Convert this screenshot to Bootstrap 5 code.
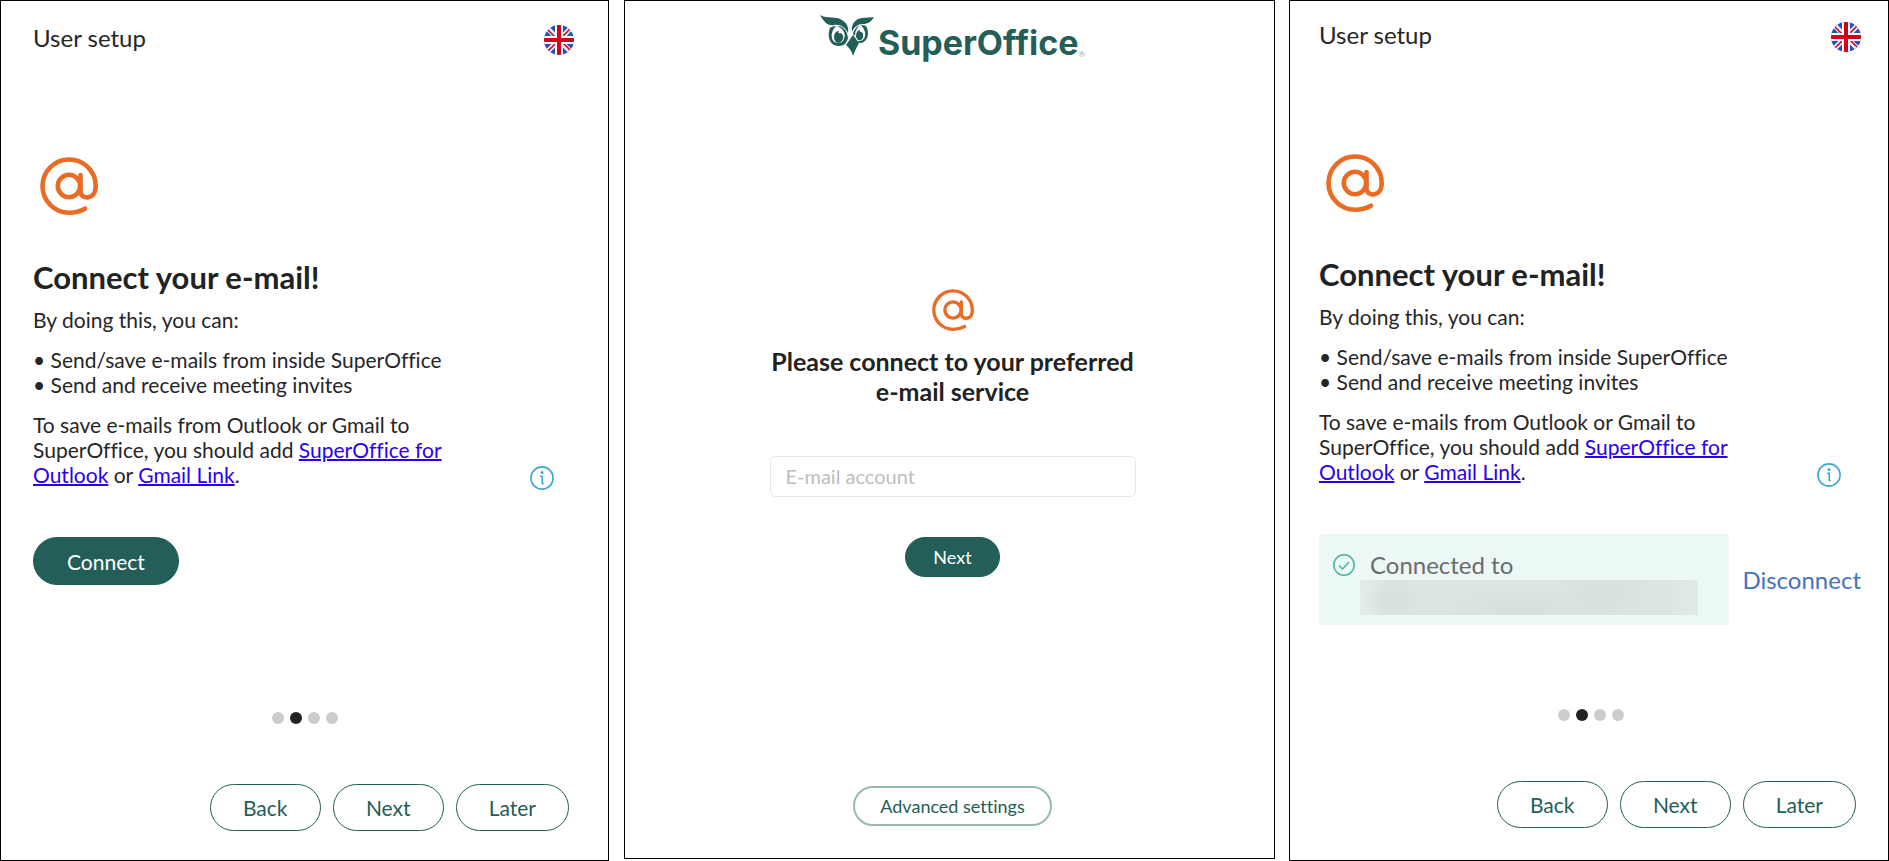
<!DOCTYPE html>
<html lang="en">
<head>
<meta charset="utf-8">
<meta name="viewport" content="width=device-width, initial-scale=1">
<title>SuperOffice user setup</title>
<link href="https://cdn.jsdelivr.net/npm/bootstrap@5.3.0/dist/css/bootstrap.min.css" rel="stylesheet">
<style>
  :root { --so-green: #235e58; --so-ink: #262626; }
  body { font-family: Lato, sans-serif; color: var(--so-ink); background: #fff; font-size: 21px; line-height: 25px; font-variant-ligatures: none; }
  .setup-grid { display: grid; grid-template-columns: 1fr; gap: 14px; min-height: 100vh; }
  @media (min-width: 1400px) { .setup-grid { grid-template-columns: 610fr 651fr 600fr; } }
  .panel { border: 1px solid #000; }
  .panel-first { padding: 22px 34px 29px 32px; margin-right: 1px; }
  .panel-mid { padding: 14px 0 32px 6px; margin-bottom: 2px; }
  .panel-last { padding: 19px 27px 32px 29px; }
  .top-title { font-size: 24px; line-height: 30px; font-weight: 400; }
  .flag { width: 30px; height: 30px; border-radius: 50%; margin-top: 2px; }
  .at-lg { width: 58px; height: 58px; margin: 102px 0 44px 7px; }
  .at-md { width: 42px; height: 42px; }
  .step-title { font-size: 31px; line-height: 36px; font-weight: 700; margin-bottom: 12px; color: #222; }
  .step-text { max-width: 440px; margin-bottom: 3px; }
  .step-text p, .step-text ul { margin-bottom: 15px; }
  .step-text p:last-child { margin-bottom: 0; }
  .step-text a { color: #2a00f0; text-decoration-thickness: 2px; }
  .step-text li::before { content: "• "; }
  .info-row { margin-bottom: 47px; }
  .info { width: 24px; height: 24px; margin-right: 20px; }
  .action { min-height: 91px; }
  .pill { border-radius: 24px; font-size: 21px; line-height: 25px; font-variant-ligatures: none; padding: 10px 32px; color: var(--so-green); border: 1px solid var(--so-green); }
  .pill:hover { background: #eaf7f5; color: var(--so-green); }
  .pill-solid { background: var(--so-green); color: #fff; padding: 11px 33px 10px; }
  .pill-solid:hover { background: #1b4b46; color: #fff; }
  .pill-sm { font-size: 18px; line-height: 22px; padding: 8px 27px; }
  .pill-soft { border: 2px solid #9ab8b4; padding: 7px 25px; }
  .dots { gap: 6px; margin-bottom: 60px; padding-left: 2px; }
  .dot { width: 12px; height: 12px; border-radius: 50%; background: #ccc; }
  .dot.active { background: #222; }
  .foot { gap: 12px; margin-right: 5px; }
  .foot .pill { min-width: 111px; }
  .status { width: 410px; max-width: 100%; padding: 19px 31px 10px 14px; background: #ebf8f6; color: #6b6b6b; font-size: 24px; line-height: 23px; }
  .status svg { width: 22px; height: 22px; }
  .status-line { gap: 15px; }
  .masked { height: 35px; margin: 4px 0 0 27px; background: radial-gradient(ellipse 30px 22px at 34px 20px, #d5dfdb, transparent), radial-gradient(ellipse 90px 22px at 160px 28px, #d5dfdc, transparent), radial-gradient(ellipse 50px 26px at 244px 14px, #d5e0dc, transparent), linear-gradient(90deg, #e2edea, #dbe6e3 30px, #dbe6e3 310px, #e1ece9); }
  .disconnect { color: #4472c4; font-size: 24px; line-height: 30px; }
  .logo { margin-bottom: 16px; }
  .owl { width: 54px; height: 41px; }
  .brand { font: 700 34px/40px Inter, sans-serif; color: var(--so-green); padding-top: 8px; }
  .reg { font-size: 8px; line-height: 8px; color: #8fb0ac; margin-bottom: 5px; }
  .mid-title { font-size: 25px; line-height: 30px; font-weight: 700; margin: 15px 0 50px; color: #222; }
  .mid-form { width: 366px; max-width: 100%; }
  .mid-form .form-control { height: 41px; font-size: 20px; padding: 0 15px; border-color: #e9e9e9; border-radius: 5px; margin-bottom: 40px; }
  .mid-form .form-control::placeholder { color: #bdbdbd; }
</style>
</head>
<body>
<svg class="d-none" aria-hidden="true">
  <symbol id="at" viewBox="0 0 58 58">
    <g fill="none" stroke="#e96b24" stroke-linecap="round" stroke-linejoin="round">
      <circle cx="29" cy="29" r="11.2"/>
      <path d="M40.500 18v16.500C40.500 42.500 55.700 44 55.700 29A26.600 26.600 0 1 0 29 55.700C35.500 55.700 40.500 54.200 45 51.700"/>
    </g>
  </symbol>
  <symbol id="uk" viewBox="0 0 30 30">
    <path fill="#2a50b8" d="M0 0h30v30H0z"/>
    <path stroke="#f4f4f8" stroke-width="5" d="M2 2l26 26M28 2L2 28"/>
    <path stroke="#d80027" stroke-width="1.700" d="M4 5l8 8M26 4l-8 8M4 26l8-8M26 25l-8-8"/>
    <path stroke="#fff" stroke-width="8" d="M15 0v30M0 15h30"/>
    <path stroke="#d0021b" stroke-width="4" d="M15 0v30M0 15h30"/>
  </symbol>
  <symbol id="info" viewBox="0 0 24 24">
    <g fill="none" stroke="#41a8cf" stroke-width="1.600"><circle cx="12" cy="12" r="11.100"/><path d="M10 10.300h2.200v6.700q0 .8 1.600.6"/></g>
    <circle cx="12" cy="6.500" r="1.500" fill="#41a8cf"/>
  </symbol>
</svg>

<main class="setup-grid">
  <section class="panel panel-first d-flex flex-column">
    <header class="d-flex justify-content-between align-items-start">
      <h1 class="top-title m-0">User setup</h1>
      <svg class="flag" role="img" aria-label="English"><use href="#uk"/></svg>
    </header>
    <svg class="at-lg flex-shrink-0" stroke-width="4.6"><use href="#at"/></svg>
    <h2 class="step-title">Connect your e-mail!</h2>
    <div class="info-row d-flex justify-content-between align-items-end">
      <div class="step-text">
        <p>By doing this, you can:</p>
        <ul class="list-unstyled"><li>Send/save e-mails from inside SuperOffice</li><li>Send and receive meeting invites</li></ul>
        <p>To save e-mails from Outlook or Gmail to SuperOffice, you should add <a href="#">SuperOffice for Outlook</a> or <a href="#">Gmail Link</a>.</p>
      </div>
      <svg class="info flex-shrink-0"><use href="#info"/></svg>
    </div>
    <div class="action"><button type="button" class="btn pill pill-solid">Connect</button></div>
    <div class="dots d-flex justify-content-center mt-auto"><span class="dot"></span><span class="dot active"></span><span class="dot"></span><span class="dot"></span></div>
    <footer class="foot d-flex justify-content-end">
      <button type="button" class="btn pill">Back</button><button type="button" class="btn pill">Next</button><button type="button" class="btn pill">Later</button>
    </footer>
  </section>

  <section class="panel panel-mid d-flex flex-column align-items-center">
    <div class="logo d-flex align-items-start">
      <svg class="owl" viewBox="0 0 54 41" fill="#235e58">
        <path d="M0 0C7 4 16 1 22 5C27 8 29 13 28 18C25 12 20 9 14 10C9 11 5 9 0 0ZM54 2C49 3 43 2 38 4C33 7 31 11 32 17C34 12 38 9 43 9C48 9 51 7 54 2Z"/>
        <path fill-rule="evenodd" d="M10 13C7 20 9 31 19 31C25 31 27 27 28 23C27 14 22 11 17 11C24 14 26 19 24 24C22 30 13 29 12 23C11 18 13 14 16 11C13 11 11 12 10 13ZM46 11C50 17 48 27 41 28Q38 28 38 26C44 27 46 21 45 17Q44 13 41 10Q44 10 46 11ZM38 11Q34 14 33 19L35 21Q35 15 39 11Z"/>
        <path d="M14 21Q15 16 19 16Q17 19 21 18Q24 20 23 24Q21 28 18 28Q14 27 14 21ZM36 22Q36 15 40 15Q39 18 42 17Q44 19 43 22Q42 26 38 25Z"/>
        <path d="M33 20L39 28Q36 33 33 41Q31 34 26 30Z"/>
      </svg>
      <span class="brand ms-1">SuperOffice</span><span class="reg align-self-end">®</span>
    </div>
    <form class="mid-form my-auto text-center" onsubmit="return false">
      <svg class="at-md" stroke-width="4.6"><use href="#at"/></svg>
      <h2 class="mid-title">Please connect to your preferred e-mail service</h2>
      <input type="email" class="form-control" placeholder="E-mail account" aria-label="E-mail account">
      <button type="submit" class="btn pill pill-solid pill-sm">Next</button>
    </form>
    <button type="button" class="btn pill pill-sm pill-soft">Advanced settings</button>
  </section>

  <section class="panel panel-last d-flex flex-column">
    <header class="d-flex justify-content-between align-items-start">
      <h1 class="top-title m-0">User setup</h1>
      <svg class="flag" role="img" aria-label="English"><use href="#uk"/></svg>
    </header>
    <svg class="at-lg flex-shrink-0" stroke-width="4.6"><use href="#at"/></svg>
    <h2 class="step-title">Connect your e-mail!</h2>
    <div class="info-row d-flex justify-content-between align-items-end">
      <div class="step-text">
        <p>By doing this, you can:</p>
        <ul class="list-unstyled"><li>Send/save e-mails from inside SuperOffice</li><li>Send and receive meeting invites</li></ul>
        <p>To save e-mails from Outlook or Gmail to SuperOffice, you should add <a href="#">SuperOffice for Outlook</a> or <a href="#">Gmail Link</a>.</p>
      </div>
      <svg class="info flex-shrink-0"><use href="#info"/></svg>
    </div>
    <div class="action d-flex justify-content-between align-items-center">
      <div class="status">
        <div class="status-line d-flex align-items-center">
          <svg viewBox="0 0 22 22" fill="none" stroke="#4bb596" stroke-width="1.500"><circle cx="11" cy="11" r="10.200"/><path d="M6 11.500l3.500 3.500 6.500-7"/></svg>
          <span>Connected to</span>
        </div>
        <div class="masked"></div>
      </div>
      <a href="#" class="disconnect text-decoration-none">Disconnect</a>
    </div>
    <div class="dots d-flex justify-content-center mt-auto"><span class="dot"></span><span class="dot active"></span><span class="dot"></span><span class="dot"></span></div>
    <footer class="foot d-flex justify-content-end">
      <button type="button" class="btn pill">Back</button><button type="button" class="btn pill">Next</button><button type="button" class="btn pill">Later</button>
    </footer>
  </section>
</main>
<script src="https://cdn.jsdelivr.net/npm/bootstrap@5.3.0/dist/js/bootstrap.bundle.min.js"></script>
</body>
</html>
